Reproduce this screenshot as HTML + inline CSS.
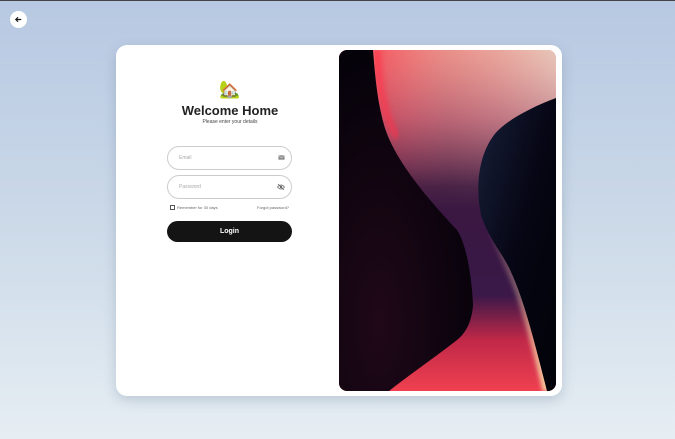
<!DOCTYPE html>
<html><head><meta charset="utf-8"><style>
*{margin:0;padding:0;box-sizing:border-box}
body{width:675px;height:439px;overflow:hidden;background:linear-gradient(180deg,#b7c8e2 0%,#cbd9e8 50%,#e6eef3 100%);font-family:"Liberation Sans",sans-serif;position:relative}
.top{position:absolute;left:0;top:0;width:675px;height:1px;background:#444}
.back{position:absolute;left:10px;top:11px;width:17px;height:17px;border-radius:50%;background:#fff;display:flex;align-items:center;justify-content:center}
.card{position:absolute;left:116px;top:45px;width:446px;height:351px;background:#fff;border-radius:11px;box-shadow:0 4px 12px rgba(80,100,130,.25)}
.panel{position:absolute;left:223px;top:5px;width:217px;height:341px;border-radius:8px;overflow:hidden}
.house{position:absolute;left:103px;top:35px;font-size:17px;line-height:20px;font-family:"Noto Color Emoji","DejaVu Sans",sans-serif}
h1{position:absolute;left:0;width:228px;text-align:center;top:58px;font-size:13px;font-weight:bold;color:#222}
.sub{position:absolute;left:0;width:228px;text-align:center;top:74px;font-size:5px;color:#444}
.inp{position:absolute;left:51px;width:125px;height:24px;border:1px solid #ccc;border-radius:12px;font-size:5px;color:#aaa;padding-left:11px;line-height:22px}
.ic{position:absolute;right:6px;top:7px}
.rem{position:absolute;left:54px;top:160px;font-size:4px;color:#666;display:flex;align-items:center;gap:2px}
.rem i{width:5px;height:5px;border:0.8px solid #555;display:inline-block}
.fg{position:absolute;left:141px;top:160px;font-size:4px;color:#666}
.btn{position:absolute;left:51px;top:176px;width:125px;height:21px;border-radius:11px;background:#141414;color:#fff;font-size:7px;font-weight:bold;text-align:center;line-height:21px}
</style></head><body>
<div class="top"></div>
<div class="back"><svg width="9" height="9" viewBox="0 0 10 10"><path d="M8 5H2M4.5 2.5L2 5l2.5 2.5" stroke="#111" stroke-width="1.3" fill="none"/></svg></div>
<div class="card">
<div class="house">🏡</div>
<h1>Welcome Home</h1>
<div class="sub">Please enter your details</div>
<div class="inp" style="top:101px">Email<svg class="ic" width="7" height="7" viewBox="0 0 8 8"><rect x="0.5" y="1.5" width="7" height="5" fill="#888"/><path d="M.5 1.5l3.5 3 3.5-3" stroke="#ddd" stroke-width=".7" fill="none"/></svg></div>
<div class="inp" style="top:130px">Password<svg class="ic" width="8" height="8" viewBox="0 0 8 8"><path d="M.5 4Q4 0 7.5 4Q4 8 .5 4Z" stroke="#666" stroke-width=".8" fill="none"/><circle cx="4" cy="4" r="1.2" fill="#666"/><path d="M1 1l6 6" stroke="#666" stroke-width=".8"/></svg></div>
<div class="rem"><i></i>Remember for 30 days</div>
<div class="fg">Forgot password?</div>
<div class="btn">Login</div>
<div class="panel"><svg width="217" height="341" viewBox="0 0 217 341">
<defs>
<linearGradient id="b" x1="0" y1="0" x2="0" y2="1"><stop offset="0" stop-color="#e07880"/><stop offset=".2" stop-color="#a04868"/><stop offset=".4" stop-color="#3a1840"/><stop offset=".72" stop-color="#3a1848"/><stop offset=".85" stop-color="#c02848"/><stop offset="1" stop-color="#f04050"/></linearGradient>
<linearGradient id="t" x1="0" y1="0" x2="1" y2="0"><stop offset="0" stop-color="#ff2a40" stop-opacity=".9"/><stop offset=".5" stop-color="#f0a090" stop-opacity=".6"/><stop offset="1" stop-color="#e8cfc0" stop-opacity=".9"/></linearGradient>
<linearGradient id="tv" x1="0" y1="0" x2="0" y2="1"><stop offset="0" stop-color="#fff" stop-opacity="1"/><stop offset="1" stop-color="#fff" stop-opacity="0"/></linearGradient>
<mask id="m"><rect width="217" height="160" fill="url(#tv)"/></mask>
<radialGradient id="d" cx=".3" cy=".8" r=".8"><stop offset="0" stop-color="#200818"/><stop offset="1" stop-color="#05020a"/></radialGradient>
<linearGradient id="r" x1="0" y1="0" x2="1" y2="1"><stop offset="0" stop-color="#18203a"/><stop offset=".5" stop-color="#060614"/><stop offset="1" stop-color="#020208"/></linearGradient>
<linearGradient id="cv" x1="0" y1="0" x2="0" y2="1"><stop offset="0" stop-color="#f2c8a0" stop-opacity="0"/><stop offset=".5" stop-color="#f2c8a0" stop-opacity=".4"/><stop offset="1" stop-color="#f6d0a0" stop-opacity="1"/></linearGradient>
<filter id="bl"><feGaussianBlur stdDeviation="2"/></filter>
</defs>
<rect width="217" height="341" fill="url(#b)"/>
<rect width="217" height="160" fill="url(#t)" mask="url(#m)"/>
<path d="M38 0C40 40 46 65 58 88" stroke="#ff3048" stroke-width="8" fill="none" filter="url(#bl)" opacity=".55"/>
<path d="M150 150C150 180 165 205 172 222C185 250 195 290 208 341" stroke="url(#cv)" stroke-width="8" fill="none" filter="url(#bl)"/>
<path d="M0 0H34C36 25 38 50 45 75C55 110 90 150 118 180C128 195 133 230 134 255C133 270 128 282 118 290C95 308 70 325 50 341H0Z" fill="url(#d)"/>
<path d="M217 48C190 58 165 72 155 85C140 105 136 135 142 165C150 190 165 205 172 222C185 250 195 290 208 341H217Z" fill="url(#r)"/>
</svg></div>
</div>
</body></html>
